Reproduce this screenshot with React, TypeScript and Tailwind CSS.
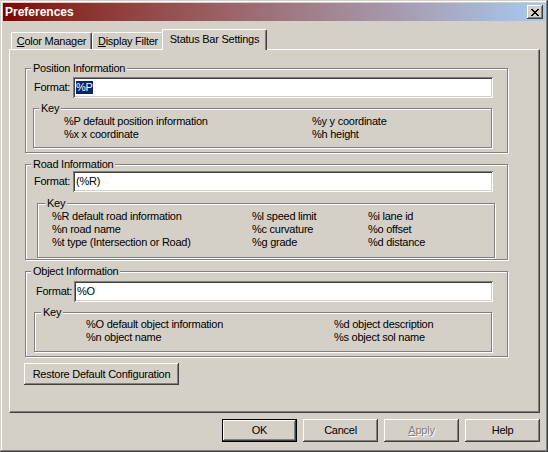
import type { ReactNode } from "react";

const raised =
  "bg-[#d4d0c8] shadow-[inset_-1px_-1px_0_#404040,inset_1px_1px_0_#fff,inset_-2px_-2px_0_#808080]";
const sunken =
  "bg-white shadow-[inset_1px_1px_0_#808080,inset_-1px_-1px_0_#fff,inset_2px_2px_0_#404040,inset_-2px_-2px_0_#d4d0c8]";
const etched = "border border-[#808080] shadow-[inset_1px_1px_0_#fff,1px_1px_0_#fff]";

function Group({ label, className, labelClass, children }: {
  label: string; className: string; labelClass: string; children: ReactNode;
}) {
  return (
    <div className={`relative ${etched} ${className}`}>
      <span className={`absolute -top-[7px] bg-[#d4d0c8] px-[2px] leading-[13px] ${labelClass}`}>{label}</span>
      {children}
    </div>
  );
}

function FormatRow({ rowClass, labelClass, inputClass, children }: {
  rowClass: string; labelClass: string; inputClass: string; children: ReactNode;
}) {
  return (
    <div className={`flex items-center ${rowClass}`}>
      <span className={labelClass}>Format:</span>
      <div className={`flex h-[21px] items-center pl-[3px] ${sunken} ${inputClass}`}>{children}</div>
    </div>
  );
}

function Keys({ rows, gridClass }: { rows: string[][]; gridClass: string }) {
  return (
    <div className={`grid ${gridClass}`}>
      {rows.flat().map((t, i) => (
        <span key={i} className="whitespace-nowrap">{t}</span>
      ))}
    </div>
  );
}

function Btn({ children, className = "", def = false }: { children: ReactNode; className?: string; def?: boolean }) {
  return (
    <button
      className={`flex h-[23px] w-[75px] items-center justify-center ${raised} ${def ? "border border-black" : ""} ${className}`}
    >
      {children}
    </button>
  );
}

function CloseGlyph() {
  const px = [
    [0, 0], [1, 0], [6, 0], [7, 0],
    [1, 1], [2, 1], [5, 1], [6, 1],
    [2, 2], [3, 2], [4, 2], [5, 2],
    [3, 3], [4, 3],
    [2, 4], [3, 4], [4, 4], [5, 4],
    [1, 5], [2, 5], [5, 5], [6, 5],
    [0, 6], [1, 6], [6, 6], [7, 6],
  ];
  return (
    <svg width="8" height="7" viewBox="0 0 8 7" shapeRendering="crispEdges">
      {px.map(([x, y]) => <rect key={`${x}-${y}`} x={x} y={y} width="1" height="1" fill="#000" />)}
    </svg>
  );
}

export default function App() {
  return (
    <div className="h-[452px] w-[548px] bg-[#d4d0c8] p-[3px] font-['Liberation_Sans',Arial,sans-serif] text-[11px] leading-[13px] tracking-[-0.25px] text-black shadow-[inset_-1px_-1px_0_#404040,inset_1px_1px_0_#d4d0c8,inset_-2px_-2px_0_#808080,inset_2px_2px_0_#fff]">
      {/* title bar */}
      <div className="flex h-[18px] items-center justify-between bg-gradient-to-r from-[#800000] to-[#a6caf0] pl-[2px] pr-[2px]">
        <span className="text-[12px] font-bold tracking-normal text-white">Preferences</span>
        <button className={`flex h-[14px] w-[16px] items-center justify-center pr-[1px] ${raised}`}>
          <CloseGlyph />
        </button>
      </div>

      <div className="px-[6px] pt-[8px]">
        {/* tabs */}
        <div className="flex h-[20px] items-end pl-[2px]">
          <div className="flex h-[17px] w-[81px] justify-center rounded-tl-[2px] rounded-tr-[2px] border-l border-t border-r border-l-white border-t-white border-r-[#404040] pt-[2px] shadow-[inset_-1px_0_0_#808080]">
            <span><u>C</u>olor Manager</span>
          </div>
          <div className="flex h-[17px] w-[72px] justify-center rounded-tl-[2px] rounded-tr-[2px] border-l border-t border-r border-l-white border-t-white border-r-[#404040] pt-[2px] shadow-[inset_-1px_0_0_#808080]">
            <span><u>D</u>isplay Filter</span>
          </div>
          <div className="relative z-10 -mb-[1px] -ml-[2px] flex h-[21px] w-[105px] justify-center rounded-tl-[2px] rounded-tr-[2px] border-l border-t border-r border-l-white border-t-white border-r-[#404040] bg-[#d4d0c8] pt-[3px] shadow-[inset_-1px_0_0_#808080]">
            <span>Status Bar Settings</span>
          </div>
        </div>

        {/* panel */}
        <div className="h-[364px] w-[531px] border border-l-white border-t-white border-r-[#404040] border-b-[#404040] shadow-[inset_-1px_-1px_0_#808080]">
          <div className="pl-[14px] pt-[18px]">
            <Group label="Position Information" className="ml-[1px] w-[483px] pt-[8px] pb-[4px]" labelClass="left-[5px]">
              <FormatRow rowClass="pl-[8px]" labelClass="w-[39px]" inputClass="w-[420px]">
                <span className="bg-[#0a246a] text-white">%P</span>
              </FormatRow>
              <Group label="Key" className="ml-[7px] mt-[10px] w-[459px] pl-[30px] pt-[6px] pb-[6px]" labelClass="left-[5px]">
                <Keys
                  gridClass="grid-cols-[248px_1fr]"
                  rows={[["%P default position information", "%y y coordinate"], ["%x x coordinate", "%h height"]]}
                />
              </Group>
            </Group>

            <Group label="Road Information" className="ml-[1px] mt-[11px] w-[483px] pt-[6px] pb-[1px]" labelClass="left-[5px]">
              <FormatRow rowClass="pl-[8px]" labelClass="w-[39px]" inputClass="w-[420px]">
                <span>(%R)</span>
              </FormatRow>
              <Group label="Key" className="ml-[11px] mt-[11px] w-[458px] pl-[14px] pt-[6px] pb-[8px]" labelClass="left-[7px]">
                <Keys
                  gridClass="grid-cols-[200px_116px_1fr]"
                  rows={[
                    ["%R default road information", "%l speed limit", "%i lane id"],
                    ["%n road name", "%c curvature", "%o offset"],
                    ["%t type (Intersection or Road)", "%g grade", "%d distance"],
                  ]}
                />
              </Group>
            </Group>

            <Group label="Object Information" className="ml-[1px] mt-[11px] w-[483px] pt-[9px] pb-[4px]" labelClass="left-[5px]">
              <FormatRow rowClass="pl-[10px]" labelClass="w-[38px]" inputClass="w-[419px]">
                <span>%O</span>
              </FormatRow>
              <Group label="Key" className="ml-[8px] mt-[10px] w-[458px] pl-[51px] pt-[5px] pb-[7px]" labelClass="left-[6px]">
                <Keys
                  gridClass="grid-cols-[248px_1fr]"
                  rows={[["%O default object information", "%d object description"], ["%n object name", "%s object sol name"]]}
                />
              </Group>
            </Group>

            <button className={`mt-[6px] flex h-[22px] w-[155px] items-center justify-center ${raised}`}>
              Restore Default Configuration
            </button>
          </div>
        </div>

        {/* dialog buttons */}
        <div className="mt-[6px] flex w-[531px] justify-end gap-[6px]">
          <Btn def>OK</Btn>
          <Btn>Cancel</Btn>
          <Btn className="text-[#808080] [text-shadow:1px_1px_0_#fff]"><span><u>A</u>pply</span></Btn>
          <Btn>Help</Btn>
        </div>
      </div>
    </div>
  );
}
